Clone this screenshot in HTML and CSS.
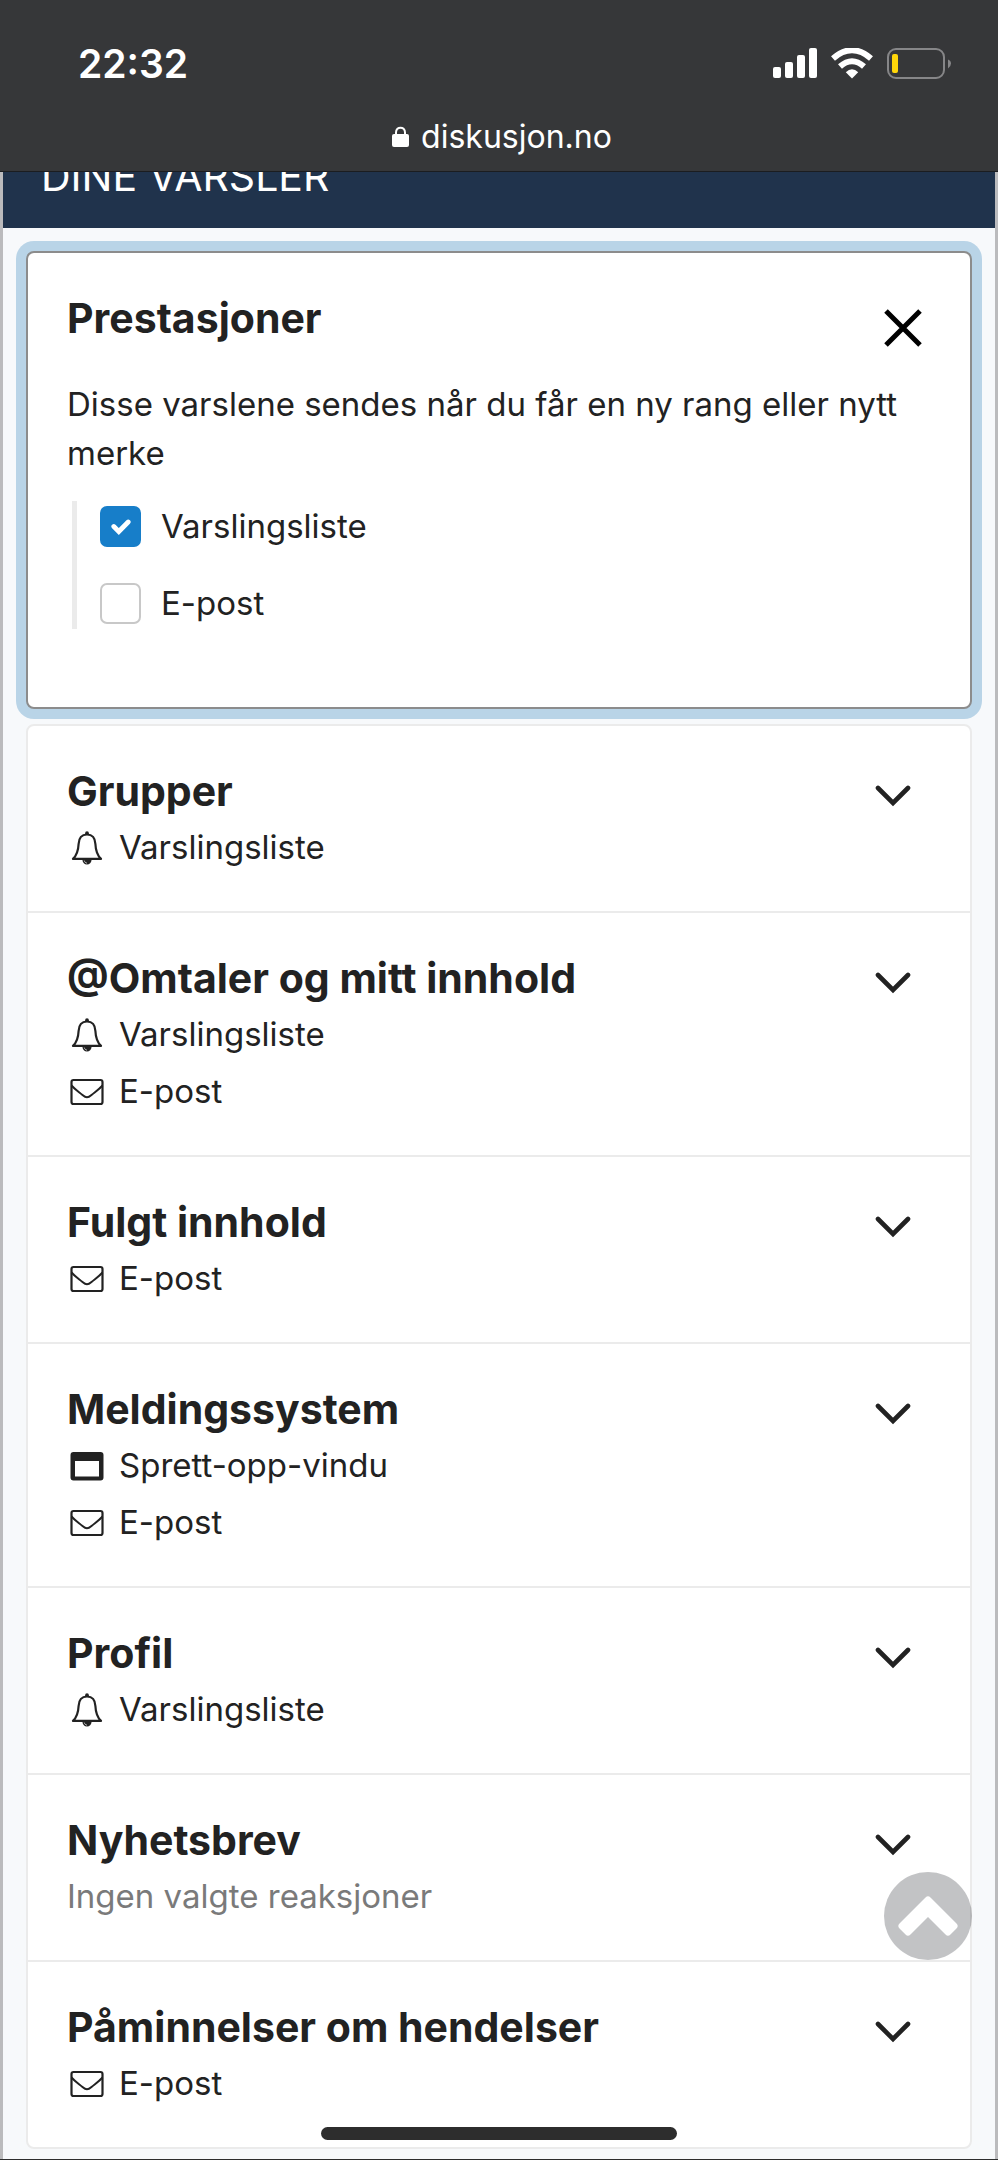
FILE: index.html
```html
<!DOCTYPE html>
<html lang="no">
<head>
    <meta charset="UTF-8">
    <meta name="viewport" content="width=device-width, initial-scale=1.0">
    <link rel="stylesheet" href="styles.css">
    <title>Dine varsler - diskusjon.no</title>
</head>
<body>
  <!-- Icons used more than once -->
  <svg class="sprite" aria-hidden="true">
    <symbol id="bell" viewBox="0 0 34 36">
      <path d="M17 4.500C10.500 4.500 8.800 9.500 8.600 14C8.300 21 6.500 25.500 3 28.900H31C27.500 25.500 25.700 21 25.400 14C25.200 9.500 23.500 4.500 17 4.500Z" fill="none" stroke="currentColor" stroke-width="2.200" stroke-linejoin="round"/>
      <circle cx="17" cy="3.200" r="1.900" fill="currentColor"/>
      <path d="M12.300 29.500H21.700C21.300 32.700 19.500 34.500 17 34.500S12.700 32.700 12.300 29.500Z" fill="currentColor"/>
      <path d="M14.300 30.600C14.600 32 15.700 33 17 33.100" fill="none" stroke="#fff" stroke-width="0.700"/>
    </symbol>
    <symbol id="mail" viewBox="0 0 34 36">
      <rect x="1.500" y="6" width="31" height="24" rx="2" fill="none" stroke="currentColor" stroke-width="2.200"/>
      <path d="M1.500 11.500C5 15.500 9 18 12.500 21C14.500 22.700 15.500 23.300 17 23.300S19.500 22.700 21.500 21C25 18 29 15.500 32.500 11.500" fill="none" stroke="currentColor" stroke-width="2"/>
    </symbol>
    <symbol id="window" viewBox="0 0 34 36">
      <path fill-rule="evenodd" fill="currentColor" d="M3.500 4H30.500A3 3 0 0 1 33.500 7V29.500A3 3 0 0 1 30.500 32.500H3.500A3 3 0 0 1 .5 29.500V7A3 3 0 0 1 3.500 4ZM5 13V28.500H29V13Z"/>
    </symbol>
    <symbol id="chevron" viewBox="0 0 36 22">
      <path d="M3 3L18 18L33 3" fill="none" stroke="currentColor" stroke-width="4.600" stroke-linecap="round"/>
    </symbol>
  </svg>

  <header class="browser">
    <div class="status">
      <span class="clock">22:32</span>
      <div class="status-icons">
        <svg width="44" height="32" viewBox="0 0 44 32" fill="#fff" aria-label="Signal">
          <rect x="0" y="19" width="8" height="11" rx="2"/>
          <rect x="12" y="14" width="8" height="16" rx="2"/>
          <rect x="24" y="7" width="8" height="23" rx="2"/>
          <rect x="36" y="0" width="8" height="30" rx="2"/>
        </svg>
        <svg width="42" height="32" viewBox="0 0 42 32" fill="none" stroke="#fff" aria-label="Wi-Fi">
          <path d="M2 10.500Q21 -6 40 10.500" stroke-width="6"/>
          <path d="M9 18.500Q21 8 33 18.500" stroke-width="6"/>
          <path d="M14.800 24.200Q21 18.500 27.200 24.200L21 30.500Z" fill="#fff" stroke="none"/>
        </svg>
        <svg width="64" height="32" viewBox="0 0 64 32" aria-label="Batteri">
          <rect x="1" y="1" width="56" height="29" rx="8" fill="none" stroke="#868688" stroke-width="2"/>
          <path d="M61 11.500Q64 12.500 64 15.500T61 20.500Z" fill="#868688"/>
          <rect x="5" y="6" width="6" height="19" rx="2" fill="#ffd60a"/>
        </svg>
      </div>
    </div>
    <div class="address">
      <svg width="17" height="22" viewBox="0 0 17 22" aria-hidden="true">
        <rect x="0" y="8" width="17" height="13" rx="2" fill="#fff"/>
        <path d="M4 9V6.500C4 0 13 0 13 6.500V9" fill="none" stroke="#fff" stroke-width="2"/>
      </svg>
      <span>diskusjon.no</span>
    </div>
  </header>

  <main class="page">
    <div class="title-bar">
      <h1>DINE VARSLER</h1>
    </div>

    <div class="content">
      <section class="card">
        <div class="card-head">
          <h2>Prestasjoner</h2>
          <button class="close" type="button" aria-label="Lukk">
            <svg width="40" height="40" viewBox="0 0 40 40"><path d="M3 3L37 37M37 3L3 37" stroke="#000" stroke-width="5"/></svg>
          </button>
        </div>
        <p class="description">Disse varslene sendes når du får en ny rang eller nytt merke</p>
        <div class="options">
          <div class="option">
            <input type="checkbox" id="achievements-list" checked>
            <label for="achievements-list">Varslingsliste</label>
          </div>
          <div class="option">
            <input type="checkbox" id="achievements-mail">
            <label for="achievements-mail">E-post</label>
          </div>
        </div>
      </section>

      <div class="list">
        <section class="item">
          <div>
            <h2>Grupper</h2>
            <p class="method"><svg class="icon"><use href="#bell"/></svg>Varslingsliste</p>
          </div>
          <button class="toggle" type="button" aria-label="Vis Grupper"><svg><use href="#chevron"/></svg></button>
        </section>
        <section class="item">
          <div>
            <h2>@Omtaler og mitt innhold</h2>
            <p class="method"><svg class="icon"><use href="#bell"/></svg>Varslingsliste</p>
            <p class="method"><svg class="icon"><use href="#mail"/></svg>E-post</p>
          </div>
          <button class="toggle" type="button" aria-label="Vis Omtaler og mitt innhold"><svg><use href="#chevron"/></svg></button>
        </section>
        <section class="item">
          <div>
            <h2>Fulgt innhold</h2>
            <p class="method"><svg class="icon"><use href="#mail"/></svg>E-post</p>
          </div>
          <button class="toggle" type="button" aria-label="Vis Fulgt innhold"><svg><use href="#chevron"/></svg></button>
        </section>
        <section class="item">
          <div>
            <h2>Meldingssystem</h2>
            <p class="method"><svg class="icon"><use href="#window"/></svg>Sprett-opp-vindu</p>
            <p class="method"><svg class="icon"><use href="#mail"/></svg>E-post</p>
          </div>
          <button class="toggle" type="button" aria-label="Vis Meldingssystem"><svg><use href="#chevron"/></svg></button>
        </section>
        <section class="item">
          <div>
            <h2>Profil</h2>
            <p class="method"><svg class="icon"><use href="#bell"/></svg>Varslingsliste</p>
          </div>
          <button class="toggle" type="button" aria-label="Vis Profil"><svg><use href="#chevron"/></svg></button>
        </section>
        <section class="item">
          <div>
            <h2>Nyhetsbrev</h2>
            <p class="method muted">Ingen valgte reaksjoner</p>
          </div>
          <button class="toggle" type="button" aria-label="Vis Nyhetsbrev"><svg><use href="#chevron"/></svg></button>
        </section>
        <section class="item">
          <div>
            <h2>Påminnelser om hendelser</h2>
            <p class="method"><svg class="icon"><use href="#mail"/></svg>E-post</p>
          </div>
          <button class="toggle" type="button" aria-label="Vis Påminnelser om hendelser"><svg><use href="#chevron"/></svg></button>
        </section>
      </div>
    </div>
  </main>

  <button class="to-top" type="button" aria-label="Til toppen">
    <svg width="60" height="40" viewBox="0 0 60 40"><path d="M30 4L56 30L50 36L30 16L10 36L4 30Z" fill="#fff" stroke="#fff" stroke-width="7" stroke-linejoin="round"/></svg>
  </button>
  <div class="home-bar"></div>
</body>
</html>
```
FILE: styles.css
```css
* {
    box-sizing: border-box;
}

body {
    margin: 0;
    min-height: 100vh;
    display: flex;
    flex-direction: column;
    background-color: #f7f9fb;
    border-bottom: 1px solid #2d2d2d;
    color: #222;
    font-family: Inter, Arial, Helvetica, sans-serif;
    font-size: 33px;
}

h1, h2, p {
    margin: 0;
}

h2 {
    font-size: 41px;
    font-weight: 700;
    line-height: 56px;
}

button {
    border: none;
    background: none;
    padding: 0;
    cursor: pointer;
}

svg {
    display: block;
}

.sprite {
    display: none;
}

/* Browser bar */
.browser {
    background-color: #363739;
    color: #fff;
    border-bottom: 1px solid #1b1d20;
}

.status {
    display: flex;
    justify-content: space-between;
    align-items: center;
    padding: 40px 47px 0 78px;
}

.clock {
    font-size: 39px;
    font-weight: 600;
    line-height: 48px;
}

.status-icons {
    display: flex;
    gap: 14px;
}

.address {
    display: flex;
    justify-content: center;
    align-items: center;
    gap: 12px;
    padding: 25px 0 10px 6px;
    font-size: 32px;
    line-height: 48px;
}

/* Page */
.page {
    flex: 1;
    border-left: 3px solid #bbbbbd;
    border-right: 3px solid #bbbbbd;
}

/* The title has scrolled halfway under the browser bar */
.title-bar {
    display: flex;
    align-items: flex-end;
    height: 56px;
    padding: 0 38px 28px;
    overflow: hidden;
    background-color: #20334c;
    color: #fff;
}

.title-bar h1 {
    font-size: 41px;
    font-weight: 400;
    line-height: 48px;
}

.content {
    display: flex;
    flex-direction: column;
    gap: 15px;
    padding: 23px 23px 9px;
}

.card {
    background-color: #fff;
    border: 2px solid #8c8c8c;
    border-radius: 8px;
    box-shadow: 0 0 0 10px #b9d4e7;
    padding: 37px 39px 78px;
}

.card-head {
    display: flex;
    justify-content: space-between;
}

.close {
    margin: 18px 8px 0 0;
}

.description {
    margin: 32px 0 23px;
    line-height: 49px;
}

.options {
    display: flex;
    flex-direction: column;
    gap: 36px;
    margin-left: 5px;
    padding: 5px 0 5px 23px;
    border-left: 5px solid #ebebeb;
}

.option {
    display: flex;
    align-items: center;
    gap: 20px;
    line-height: 41px;
}

.option input {
    appearance: none;
    width: 41px;
    height: 41px;
    margin: 0;
    border: 2px solid #c8c8c8;
    border-radius: 7px;
    background-color: #fff;
}

.option input:checked {
    border-color: #177ec9;
    background: #177ec9 url("data:image/svg+xml,%3Csvg xmlns='http://www.w3.org/2000/svg' viewBox='0 0 20 16'%3E%3Cpath d='M2.800 7.500L7.800 12.500L17.200 3' fill='none' stroke='white' stroke-width='4.800' stroke-linecap='round'/%3E%3C/svg%3E") center / 20px 16px no-repeat;
}

.list {
    background-color: #fff;
    border: 2px solid #ebebeb;
    border-radius: 8px;
}

.item {
    display: flex;
    justify-content: space-between;
    align-items: flex-start;
    padding: 37px 39px 35px;
    border-bottom: 2px solid #ebebeb;
}

.item:last-child {
    border-bottom: none;
}

.method {
    display: flex;
    align-items: center;
    line-height: 57px;
}

.muted {
    color: #7a7a7a;
}

.icon {
    width: 34px;
    height: 36px;
    margin: 0 15px 0 3px;
}

.toggle {
    margin: 22px 20px 0 0;
    color: #222;
}

.toggle svg {
    width: 36px;
    height: 22px;
}

/* Floating parts */
.to-top {
    position: fixed;
    right: 26px;
    bottom: 200px;
    display: flex;
    justify-content: center;
    align-items: center;
    width: 88px;
    height: 88px;
    border-radius: 50%;
    background-color: rgba(54, 55, 62, 0.3);
}

.home-bar {
    position: fixed;
    bottom: 20px;
    left: 50%;
    width: 356px;
    height: 13px;
    margin-left: -178px;
    border-radius: 7px;
    background-color: #2d2d2d;
}
```
